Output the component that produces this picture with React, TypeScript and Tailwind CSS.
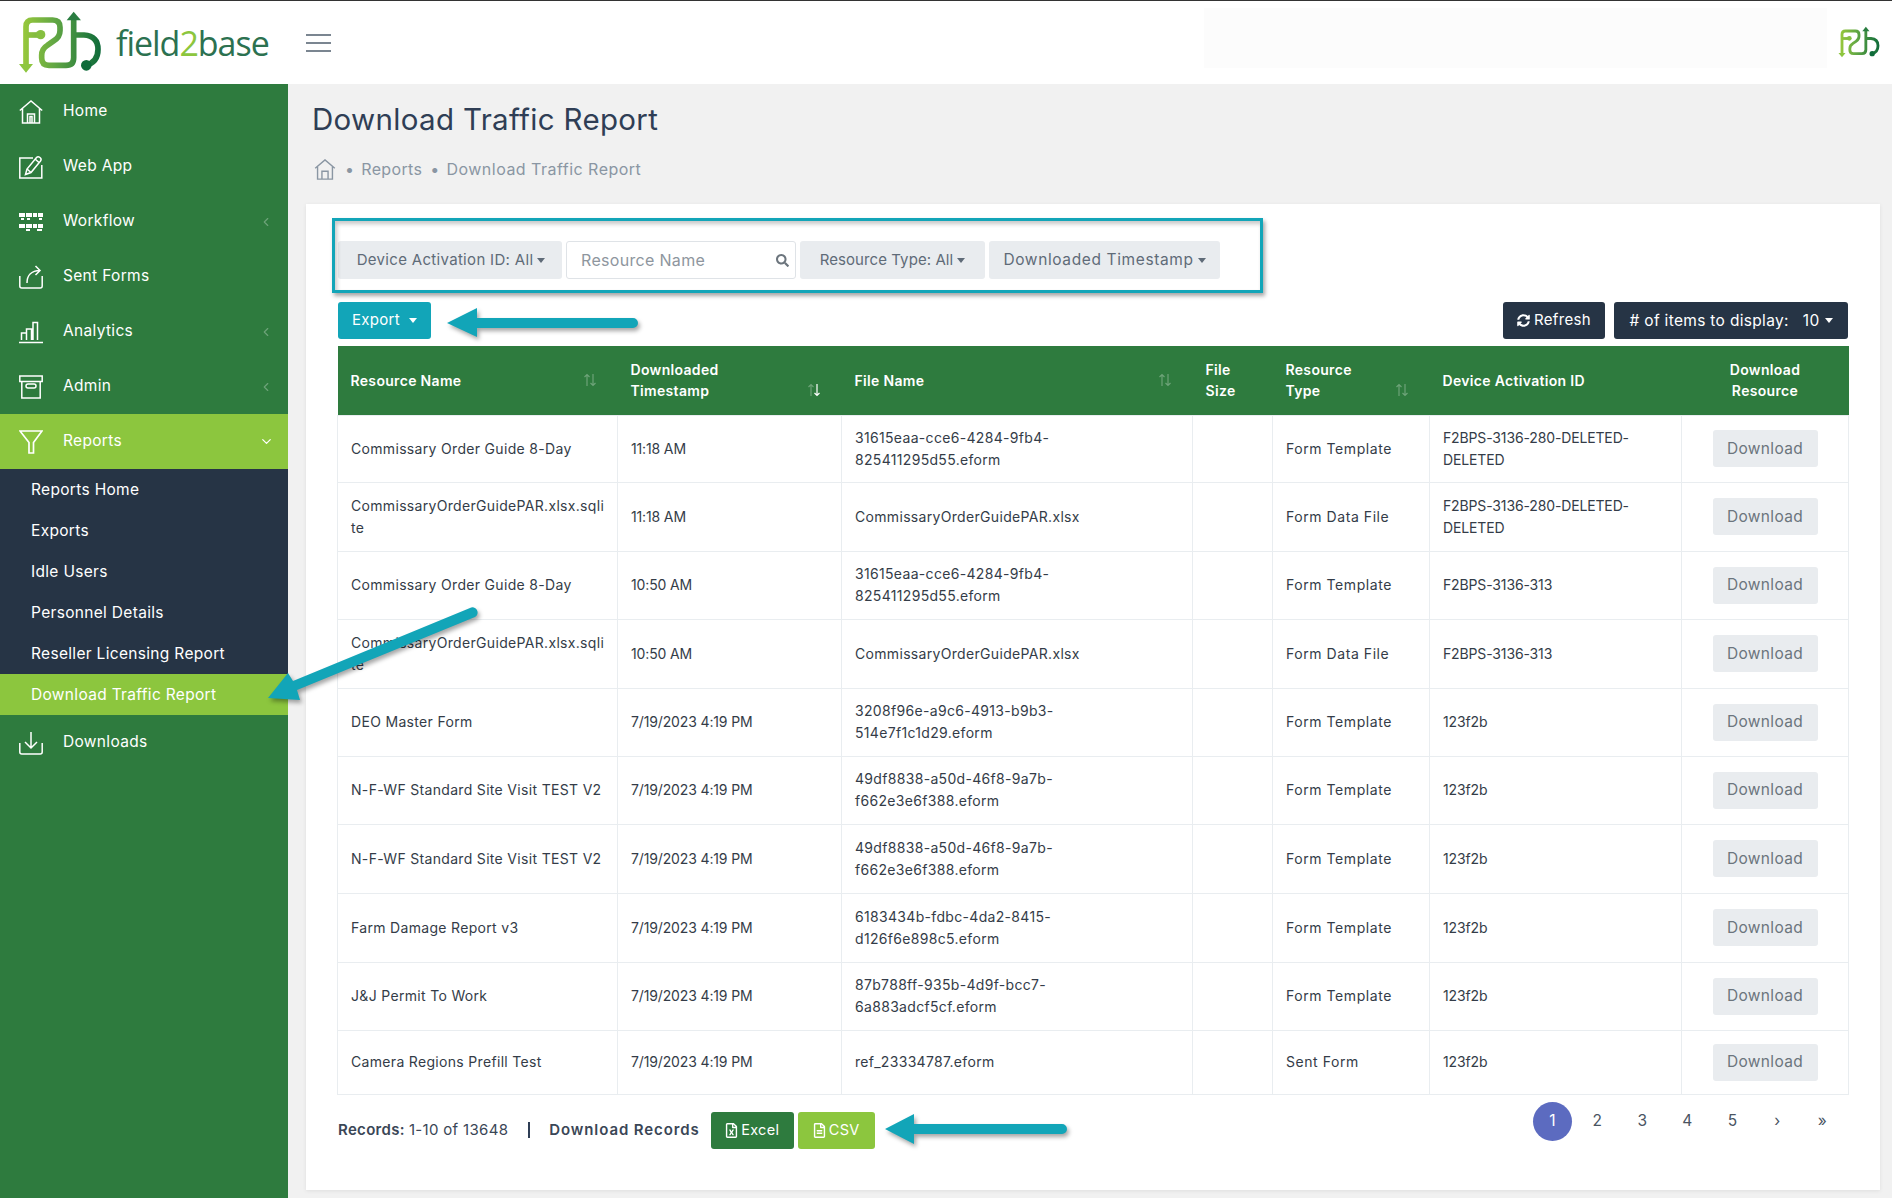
import React from "react";
import { ChevronDown, ChevronLeft } from "lucide-react";
import { FaSearch, FaSyncAlt, FaRegFileExcel, FaRegFileAlt } from "react-icons/fa";

/** f2b mark, drawn on the 300x222 grid of the big header logo */
function Logo({ id, className }: { id: string; className: string }) {
  return (
    <svg viewBox="0 0 300 222" className={className} fill="none">
      <defs>
        <linearGradient id={id} x1="30" y1="0" x2="272" y2="0" gradientUnits="userSpaceOnUse">
          <stop offset="0" stopColor="#9ccb3b" />
          <stop offset="0.45" stopColor="#5fa544" />
          <stop offset="1" stopColor="#0f6b3a" />
        </linearGradient>
      </defs>
      <g stroke={`url(#${id})`} strokeWidth="17">
        <path d="M48 178V62Q48 42 68 42H128Q150 42 150 64V74Q150 92 132 104L112 118Q95 128 95 148V156Q95 178 117 178H168Q191 178 191 155V40" />
        <path d="M48 87H88" />
        <path d="M191 87H222Q264 90 264 130Q264 170 226 178" />
      </g>
      <path d="M27 174H69L48 200Z" fill="#8dc63f" />
      <path d="M170 43H213L191 17Z" fill="#2a7d41" />
      <circle cx="92" cy="86" r="14" fill="#86bf40" />
      <circle cx="229" cy="178" r="16" fill="#0f6b3a" />
    </svg>
  );
}

const ico = "w-6 h-6 shrink-0 fill-none stroke-white stroke-[1.5]";

const icons: Record<string, React.ReactNode> = {
  Home: (
    <svg viewBox="0 0 24 24" className={ico}>
      <path d="M.8 10.500 12 1l11.200 9.500M3.500 8.500V23h17V8.500M8.500 23v-9h7v9M11 23v-6.500h2V23" />
    </svg>
  ),
  "Web App": (
    <svg viewBox="0 0 24 24" className={ico}>
      <path d="M14 3H.8v20h22V10" />
      <path d="M6.500 19.500 8 14 17.500 2.500q1.500-1.500 3.500 0t.5 3.500L12 17.500Z" />
      <path d="M8 14l4 3.500M16 4l4 3.500" />
    </svg>
  ),
  Workflow: (
    <svg viewBox="0 0 24 24" className="w-6 h-6 shrink-0 fill-white">
      <path d="M0 3h6v4H0zM7 3h6v4H7zM14 3h4v4h-4zM19 3h5v4h-5zM2 8h3v2H2zM8 8h3v2H8zM20 8h3v2h-3z" />
      <path d="M0 14h6v4H0zM7 14h6v4H7zM14 14h4v4h-4zM19 14h5v4h-5zM7 19h4v2H7zM18 19h5v2h-5z" />
    </svg>
  ),
  "Sent Forms": (
    <svg viewBox="0 0 24 24" className={ico}>
      <path d="M.8 11v10q0 2 2 2h18.400q2 0 2-2V11" />
      <path d="M8 18c0-7 4-12.500 13-12.500M16.500 1l4.500 4.500-4.500 4.500" />
    </svg>
  ),
  Analytics: (
    <svg viewBox="0 0 24 24" className={ico}>
      <path d="M0 22.500h24M2.500 20v-7h5v7M7.500 20V9h5v11M14 20V2.500h4.500V20" />
    </svg>
  ),
  Admin: (
    <svg viewBox="0 0 24 24" className={ico}>
      <path d="M.8 1h22.400v5.500H.8zM2.800 6.500v16.500h18.400V6.500" />
      <rect x="7" y="9" width="10" height="4" rx="2" />
    </svg>
  ),
  Reports: (
    <svg viewBox="0 0 24 24" className="w-6 h-6 shrink-0 fill-none stroke-white stroke-[1.7]">
      <path d="M1 1h22l-8.500 11.500V23h-4.500V12.500Z" />
    </svg>
  ),
  Downloads: (
    <svg viewBox="0 0 24 24" className={ico}>
      <path d="M.8 12v9q0 2 2 2h18.400q2 0 2-2v-9M12 1v16M6 11l6 6 6-6" />
    </svg>
  ),
};

function SortIcon({ active }: { active?: boolean }) {
  return (
    <svg viewBox="0 0 14 14" className="w-[14px] h-[14px] fill-none stroke-[1.2]">
      <path d="M4 13V1.500M1.500 4 4 1.500 6.500 4" className="stroke-white/30" />
      <path d="M10 1v11.500M7.500 10l2.500 2.500 2.500-2.500" className={active ? "stroke-white" : "stroke-white/30"} />
    </svg>
  );
}

function Caret({ className = "" }: { className?: string }) {
  return <span className={`inline-block w-0 h-0 border-x-[4.500px] border-x-transparent border-t-[5px] border-t-current ${className}`} />;
}

const mainNav = ["Home", "Web App", "Workflow", "Sent Forms", "Analytics", "Admin"];
const withChevron = ["Workflow", "Analytics", "Admin"];
const subNav = ["Reports Home", "Exports", "Idle Users", "Personnel Details", "Reseller Licensing Report"];

const rows = [
  { h: "h-[67px]", name: "Commissary Order Guide 8-Day", time: "11:18 AM", file: "31615eaa-cce6-4284-9fb4-\n825411295d55.eform", type: "Form Template", dev: "F2BPS-3136-280-DELETED-\nDELETED" },
  { h: "h-[69px]", name: "CommissaryOrderGuidePAR.xlsx.sqli\nte", time: "11:18 AM", file: "CommissaryOrderGuidePAR.xlsx", type: "Form Data File", dev: "F2BPS-3136-280-DELETED-\nDELETED" },
  { h: "h-[68px]", name: "Commissary Order Guide 8-Day", time: "10:50 AM", file: "31615eaa-cce6-4284-9fb4-\n825411295d55.eform", type: "Form Template", dev: "F2BPS-3136-313" },
  { h: "h-[69px]", name: "CommissaryOrderGuidePAR.xlsx.sqli\nte", time: "10:50 AM", file: "CommissaryOrderGuidePAR.xlsx", type: "Form Data File", dev: "F2BPS-3136-313" },
  { h: "h-[68px]", name: "DEO Master Form", time: "7/19/2023 4:19 PM", file: "3208f96e-a9c6-4913-b9b3-\n514e7f1c1d29.eform", type: "Form Template", dev: "123f2b" },
  { h: "h-[68px]", name: "N-F-WF Standard Site Visit TEST V2", time: "7/19/2023 4:19 PM", file: "49df8838-a50d-46f8-9a7b-\nf662e3e6f388.eform", type: "Form Template", dev: "123f2b" },
  { h: "h-[69px]", name: "N-F-WF Standard Site Visit TEST V2", time: "7/19/2023 4:19 PM", file: "49df8838-a50d-46f8-9a7b-\nf662e3e6f388.eform", type: "Form Template", dev: "123f2b" },
  { h: "h-[69px]", name: "Farm Damage Report v3", time: "7/19/2023 4:19 PM", file: "6183434b-fdbc-4da2-8415-\nd126f6e898c5.eform", type: "Form Template", dev: "123f2b" },
  { h: "h-[68px]", name: "J&J Permit To Work", time: "7/19/2023 4:19 PM", file: "87b788ff-935b-4d9f-bcc7-\n6a883adcf5cf.eform", type: "Form Template", dev: "123f2b" },
  { h: "h-[64px]", name: "Camera Regions Prefill Test", time: "7/19/2023 4:19 PM", file: "ref_23334787.eform", type: "Sent Form", dev: "123f2b" },
];

const td = "border border-[#e9edf0] px-[13px] align-middle whitespace-pre";
const th = "px-[13px] align-middle font-semibold";
const filterBtn = "h-[38px] flex items-center justify-center gap-[4px] rounded-[3px] bg-[#e9ecef] text-[#5f6b78]";
const darkBtn = "h-[37px] flex items-center justify-center rounded-[3px] bg-[#263445] text-white";

export default function App() {
  return (
    <div className="relative flex flex-col h-screen w-full overflow-hidden bg-white text-[#343c48] font-['Inter','Noto_Sans',sans-serif] tracking-[0.02em]">
      {/* header */}
      <header className="h-[84px] shrink-0 flex items-center border-t border-[#333] bg-white">
        <Logo id="logo-big" className="w-[100px] h-[74px] ml-[10px] shrink-0" />
        <div className="ml-[6px] mt-[2px] w-[160px] text-[34px] font-normal text-[#2c7150] tracking-[-0.03em] font-['Open_Sans',sans-serif]">
          field<span className="text-[#8cc63e]">2</span>base
        </div>
        <div className="ml-[30px] w-[25px] flex flex-col gap-[6px]">
          <span className="h-[2px] bg-[#7b8691]" />
          <span className="h-[2px] bg-[#7b8691]" />
          <span className="h-[2px] bg-[#7b8691]" />
        </div>
        <div className="ml-auto -mt-[9px] w-[623px] h-[60px] bg-[#fcfcfc]" />
        <Logo id="logo-small" className="w-[50px] h-[37px] ml-[7px] mr-[8px] shrink-0" />
      </header>

      <div className="flex flex-1 min-h-0">
        {/* sidebar */}
        <aside className="w-[288px] shrink-0 bg-[#2e7b3e] text-white text-[15.500px]">
          {mainNav.map((n) => (
            <div key={n} className="h-[55px] flex items-center pl-[19px] pr-[15px]">
              {icons[n]}
              <span className="ml-[20px] -mt-[1px]">{n}</span>
              {withChevron.includes(n) && <ChevronLeft className="ml-auto w-[14px] h-[14px] text-white/30" />}
            </div>
          ))}
          <div className="h-[55px] flex items-center pl-[19px] pr-[14px] bg-[#8cc63e]">
            {icons.Reports}
            <span className="ml-[20px] -mt-[1px]">Reports</span>
            <ChevronDown className="ml-auto w-[15px] h-[15px]" />
          </div>
          <div className="bg-[#263445]">
            {subNav.map((n) => (
              <div key={n} className="h-[41px] flex items-center pl-[31px]">
                {n}
              </div>
            ))}
          </div>
          <div className="h-[41px] flex items-center pl-[31px] bg-[#8cc63e]">Download Traffic Report</div>
          <div className="h-[55px] flex items-center pl-[19px]">
            {icons.Downloads}
            <span className="ml-[20px] -mt-[1px]">Downloads</span>
          </div>
        </aside>

        {/* content */}
        <main className="flex-1 min-w-0 flex flex-col bg-[#f1f1f1] pl-[18px] pr-[12px] pb-[8px]">
          <h1 className="ml-[6px] mt-[17px] h-[36px] leading-[36px] text-[29.500px] font-normal text-[#2f3e55]">Download Traffic Report</h1>
          <div className="ml-[8px] mt-[20px] h-[24px] flex items-center text-[16px] text-[#8a96a3]">
            <svg viewBox="0 0 24 24" className="w-[22px] h-[21px] fill-none stroke-[#8a96a3] stroke-[1.6]">
              <path d="M.8 10.500 12 1l11.200 9.500M3.500 8.500V23h17V8.500M8.500 23v-9h7v9" />
            </svg>
            <span className="ml-[9px] mr-[7px]">•</span>
            Reports
            <span className="ml-[8px] mr-[7px]">•</span>
            <span className="tracking-[0.03em]">Download Traffic Report</span>
          </div>

          <section className="mt-[23px] flex-1 bg-white shadow-[0_1px_4px_rgba(0,0,0,0.08)] px-[32px] pt-[37px]">
            {/* filters */}
            <div className="flex gap-[4px]">
              <button className={`${filterBtn} w-[224px] text-[15px]`}>
                <span className="ml-[2px]">Device Activation ID: All</span> <Caret />
              </button>
              <div className="w-[230px] h-[38px] flex items-center justify-between rounded-[3px] border border-[#dfe3e7] pl-[14px] pr-[6px]">
                <span className="text-[16px] text-[#8e969e]">Resource Name</span>
                <FaSearch className="w-[13px] h-[13px] text-[#6c757d]" />
              </div>
              <button className={`${filterBtn} w-[185px] text-[15px] tracking-[0.005em]`}>
                Resource Type: All <Caret />
              </button>
              <button className={`${filterBtn} w-[231px] text-[15.500px] tracking-[0.04em]`}>
                Downloaded Timestamp <Caret />
              </button>
            </div>

            {/* actions */}
            <div className="mt-[23px] flex items-center">
              <button className="w-[93px] h-[37px] flex items-center justify-center gap-[9px] rounded-[3px] bg-[#12a5b8] text-white text-[15px]">
                Export <Caret />
              </button>
              <button className={`${darkBtn} ml-auto w-[102px] gap-[4px] text-[15px]`}>
                <FaSyncAlt className="w-[13px] h-[13px]" /> Refresh
              </button>
              <button className={`${darkBtn} ml-[9px] w-[234px] text-[15.500px]`}>
                # of items to display: <span className="ml-[14px] mr-[5px]">10</span>
                <Caret />
              </button>
            </div>

            {/* table */}
            <table className="mt-[7px] -ml-[1px] w-[1511px] table-fixed border-collapse text-[14px] leading-[22px]">
              <colgroup>
                <col className="w-[280px]" />
                <col className="w-[224px]" />
                <col className="w-[351px]" />
                <col className="w-[80px]" />
                <col className="w-[157px]" />
                <col className="w-[252px]" />
                <col className="w-[167px]" />
              </colgroup>
              <thead>
                <tr className="h-[69px] bg-[#2e7b3e] text-white leading-[21px]">
                  <th className={`${th} text-left`}>
                    <div className="flex items-center justify-between pr-[8px]">
                      Resource Name <SortIcon />
                    </div>
                  </th>
                  <th className={`${th} text-left`}>
                    <div className="flex items-end justify-between pr-[8px]">
                      <span>
                        Downloaded
                        <br />
                        Timestamp
                      </span>
                      <span className="mb-[4px]">
                        <SortIcon active />
                      </span>
                    </div>
                  </th>
                  <th className={`${th} text-left`}>
                    <div className="flex items-center justify-between pr-[8px]">
                      File Name <SortIcon />
                    </div>
                  </th>
                  <th className={`${th} text-left`}>
                    File
                    <br />
                    Size
                  </th>
                  <th className={`${th} text-left`}>
                    <div className="flex items-end justify-between pr-[8px]">
                      <span>
                        Resource
                        <br />
                        Type
                      </span>
                      <span className="mb-[4px]">
                        <SortIcon />
                      </span>
                    </div>
                  </th>
                  <th className={`${th} text-left`}>Device Activation ID</th>
                  <th className={`${th} text-center`}>
                    Download
                    <br />
                    Resource
                  </th>
                </tr>
              </thead>
              <tbody>
                {rows.map((r, i) => (
                  <tr key={i} className={r.h}>
                    <td className={td}>{r.name}</td>
                    <td className={`${td} tracking-[-0.01em]`}>{r.time}</td>
                    <td className={td}>{r.file}</td>
                    <td className={td} />
                    <td className={`${td} tracking-[0.04em]`}>{r.type}</td>
                    <td className={`${td} tracking-[-0.01em]`}>{r.dev}</td>
                    <td className={td}>
                      <button className="block mx-auto w-[105px] h-[37px] rounded-[3px] bg-[#e9ecef] text-[15.500px] text-[#6c757d]">Download</button>
                    </td>
                  </tr>
                ))}
              </tbody>
            </table>

            {/* footer */}
            <div className="flex items-start">
              <div className="mt-[17px] h-[37px] flex items-center text-[15px] text-[#3a4656]">
                <b className="font-semibold">Records:</b>
                <span className="ml-[4px]">1-10 of 13648</span>
                <span className="ml-[20px] w-[2px] h-[16px] bg-[#2f3e55]" />
                <b className="ml-[19px] font-semibold tracking-[0.06em]">Download Records</b>
                <button className="ml-[11px] w-[83px] h-[37px] flex items-center justify-center gap-[3px] rounded-[3px] bg-[#2e7b3e] text-white text-[14.500px]">
                  <FaRegFileExcel className="w-[13px] h-[15px]" /> Excel
                </button>
                <button className="ml-[4px] w-[77px] h-[37px] flex items-center justify-center gap-[3px] rounded-[3px] bg-[#8cc63e] text-white text-[14.500px]">
                  <FaRegFileAlt className="w-[13px] h-[15px]" /> CSV
                </button>
              </div>
              <div className="ml-auto mr-[6px] mt-[7px] flex gap-[6px] text-[15.500px] text-[#4a5462]">
                <span className="w-[39px] h-[39px] flex items-center justify-center rounded-full bg-[#5c6bc0] text-white">1</span>
                {["2", "3", "4", "5", "›", "»"].map((p) => (
                  <span key={p} className="w-[39px] h-[39px] flex items-center justify-center">
                    {p}
                  </span>
                ))}
              </div>
            </div>
          </section>
        </main>
      </div>

      {/* annotations lying over the screenshot */}
      <div className="absolute left-[332px] top-[218px] w-[931px] h-[75px] border-[3px] border-[#12a5b8] shadow-[2px_3px_4px_rgba(0,0,0,0.35),inset_2px_3px_4px_rgba(0,0,0,0.22)]" />
      <svg viewBox="0 0 1892 1198" className="absolute left-0 top-0 w-[1892px] h-[1198px] pointer-events-none drop-shadow-[2px_3px_2px_rgba(0,0,0,0.35)]">
        <path d="M447 323 477 308V318H633a5 5 0 0 1 0 10H477V337Z" fill="#12a5b8" />
        <path d="M885 1129 914 1114V1124H1062a5 5 0 0 1 0 10H914V1144Z" fill="#12a5b8" />
        <path d="M268 698 288 673 293 681 470 608a5 5 0 0 1 5 9L297 690 300 700Z" fill="#12a5b8" />
      </svg>
    </div>
  );
}
